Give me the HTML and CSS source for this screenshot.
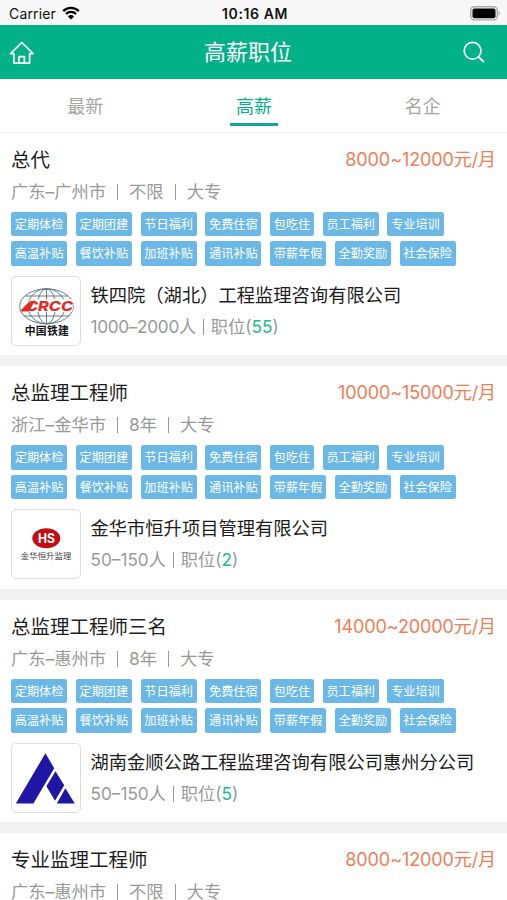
FILE: index.html
```html
<!DOCTYPE html>
<html lang="zh-CN">
<head>
    <meta charset="UTF-8">
    <meta name="viewport" content="width=device-width, initial-scale=1.0">
    <title>高薪职位</title>
    <link rel="stylesheet" href="styles.css">
</head>
<body>

    <!-- Status bar -->
    <div class="status-bar">
        <div class="carrier">
            <span>Carrier</span>
            <svg class="wifi" width="18" height="14" viewBox="0 0 18 14">
                <path d="M1.2 5.1a11 11 0 0 1 15.6 0M4 8a7 7 0 0 1 10 0" fill="none" stroke="#000" stroke-width="2.4"/>
                <path d="M9 13.6L5.9 10.4a4.4 4.4 0 0 1 6.2 0z"/>
            </svg>
        </div>
        <div class="time">10:16 AM</div>
        <svg class="battery" width="31" height="15" viewBox="0 0 31 15">
            <rect x=".7" y=".7" width="26.6" height="13.2" rx="3.8" fill="none" stroke="#aaa" stroke-width="1.4"/>
            <rect x="2.5" y="2.4" width="23" height="9.8" rx="2"/>
            <path d="M28.6 4.6q2.6 2.7 0 5.4z" fill="#aaa"/>
        </svg>
    </div>

    <!-- Header -->
    <div class="header">
        <svg class="home" width="26" height="24" viewBox="0 0 26 24">
            <path d="M1.5 13.7L12.8 2.5l11.3 11.2H20.6V23.1H4.9V13.7zM10 23v-6.4h5.4V23" fill="none" stroke="#fff" stroke-width="1.7" stroke-linejoin="round"/>
        </svg>
        <h1>高薪职位</h1>
        <svg class="search" width="22" height="22" viewBox="0 0 22 22">
            <circle cx="9.6" cy="9.8" r="8.4" fill="none" stroke="#fff" stroke-width="1.7"/>
            <path d="M15.4 15.6l5.4 5.4" stroke="#fff" stroke-width="1.8"/>
        </svg>
    </div>

    <!-- Tabs -->
    <div class="tabs">
        <a class="tab"><span>最新</span></a>
        <a class="tab active"><span>高薪</span></a>
        <a class="tab"><span>名企</span></a>
    </div>

    <!-- Job list -->
    <div class="job-list">
        <div class="job">
            <div class="job-top">
                <h2>总代</h2>
                <span class="salary">8000~12000元/月</span>
            </div>
            <div class="meta"><span>广东–广州市</span><i></i><span>不限</span><i></i><span>大专</span></div>
            <div class="tags">
                <span>定期体检</span><span>定期团建</span><span>节日福利</span><span>免费住宿</span><span>包吃住</span><span>员工福利</span><span>专业培训</span>
                <span>高温补贴</span><span>餐饮补贴</span><span>加班补贴</span><span>通讯补贴</span><span>带薪年假</span><span>全勤奖励</span><span>社会保险</span>
            </div>
            <div class="company">
                <div class="logo">
                    <svg width="68" height="68" viewBox="0 0 68 68">
                        <g fill="none" stroke="#527080" stroke-width=".9">
                            <ellipse cx="34.5" cy="29.3" rx="26.8" ry="17.5"/>
                            <ellipse cx="34.5" cy="29.3" rx="18.5" ry="17.5"/>
                            <ellipse cx="34.5" cy="29.3" rx="9" ry="17.5"/>
                            <path d="M34.5 11.8v35M13 19h43M12 39h45"/>
                        </g>
                        <path d="M7 35L17 24.5Q19.5 22.3 24 22.3H62.5L60 35z" fill="#fff"/>
                        <path d="M7.5 34.4L15.5 26.4Q18.5 23.6 23 23.6L17 34.4z" fill="#e9281f"/>
                        <text class="crcc" x="14" y="34.2" textLength="47" lengthAdjust="spacingAndGlyphs">CRCC</text>
                        <text class="crcc-name" x="12.8" y="58" textLength="44">中国铁建</text>
                    </svg>
                </div>
                <div class="company-info">
                    <h3>铁四院（湖北）工程监理咨询有限公司</h3>
                    <p><span class="size wide">1000–2000人</span><i></i><span>职位(<b>55</b>)</span></p>
                </div>
            </div>
        </div>

        <div class="job">
            <div class="job-top">
                <h2>总监理工程师</h2>
                <span class="salary">10000~15000元/月</span>
            </div>
            <div class="meta"><span>浙江–金华市</span><i></i><span>8年</span><i></i><span>大专</span></div>
            <div class="tags">
                <span>定期体检</span><span>定期团建</span><span>节日福利</span><span>免费住宿</span><span>包吃住</span><span>员工福利</span><span>专业培训</span>
                <span>高温补贴</span><span>餐饮补贴</span><span>加班补贴</span><span>通讯补贴</span><span>带薪年假</span><span>全勤奖励</span><span>社会保险</span>
            </div>
            <div class="company">
                <div class="logo">
                    <svg width="68" height="68" viewBox="0 0 68 68">
                        <ellipse cx="34.3" cy="28.2" rx="14" ry="10" fill="#c20d12"/>
                        <text class="hs" x="26" y="32.9" textLength="17" lengthAdjust="spacingAndGlyphs">HS</text>
                        <text class="hs-name" x="8.8" y="49.3" textLength="50.5">金华恒升监理</text>
                    </svg>
                </div>
                <div class="company-info">
                    <h3>金华市恒升项目管理有限公司</h3>
                    <p><span class="size">50–150人</span><i></i><span>职位(<b>2</b>)</span></p>
                </div>
            </div>
        </div>

        <div class="job">
            <div class="job-top">
                <h2>总监理工程师三名</h2>
                <span class="salary">14000~20000元/月</span>
            </div>
            <div class="meta"><span>广东–惠州市</span><i></i><span>8年</span><i></i><span>大专</span></div>
            <div class="tags">
                <span>定期体检</span><span>定期团建</span><span>节日福利</span><span>免费住宿</span><span>包吃住</span><span>员工福利</span><span>专业培训</span>
                <span>高温补贴</span><span>餐饮补贴</span><span>加班补贴</span><span>通讯补贴</span><span>带薪年假</span><span>全勤奖励</span><span>社会保险</span>
            </div>
            <div class="company">
                <div class="logo">
                    <svg width="68" height="68" viewBox="0 0 68 68">
                        <path d="M33.4 9.3L42.2 24.2 21.4 59.6H3.8zM43.5 27.2L52.2 41.3 43 56.8 34.4 42.3zM53.4 44.3L62.8 59.6H44.8z" fill="#1f16a5"/>
                    </svg>
                </div>
                <div class="company-info">
                    <h3>湖南金顺公路工程监理咨询有限公司惠州分公司</h3>
                    <p><span class="size">50–150人</span><i></i><span>职位(<b>5</b>)</span></p>
                </div>
            </div>
        </div>

        <div class="job last">
            <div class="job-top">
                <h2>专业监理工程师</h2>
                <span class="salary">8000~12000元/月</span>
            </div>
            <div class="meta"><span>广东–惠州市</span><i></i><span>不限</span><i></i><span>大专</span></div>
        </div>
    </div>

</body>
</html>
```
FILE: styles.css
```css
* {
    margin: 0;
    padding: 0;
    box-sizing: border-box;
}

body {
    height: 900px;
    overflow: hidden;
    display: flex;
    flex-direction: column;
    background: #fff;
    color: #1c1c1c;
    font-family: Inter, "Noto Sans CJK SC", sans-serif;
}

svg {
    display: block;
}

/* Status bar */
.status-bar {
    height: 25px;
    flex: none;
    padding: 1px 6px 0 9px;
    display: grid;
    grid-template-columns: 1fr auto 1fr;
    align-items: center;
    background: #f7f7f7;
    color: #111;
    font-size: 14px;
}

.carrier {
    display: flex;
    align-items: center;
    gap: 6px;
    letter-spacing: 0.15px;
}

.time {
    font-weight: 600;
    letter-spacing: 0.6px;
}

.battery {
    justify-self: end;
}

/* Header */
.header {
    height: 54px;
    flex: none;
    padding: 0 22px 0 9px;
    display: grid;
    grid-template-columns: 1fr auto 1fr;
    align-items: center;
    background: #03b188;
}

.header h1 {
    padding-left: 2px;
    color: #fff;
    font-size: 22px;
    font-weight: 400;
    line-height: 54px;
}

.search {
    justify-self: end;
}

/* Tabs */
.tabs {
    height: 54px;
    flex: none;
    display: flex;
    padding-left: 1px;
    border-bottom: 1px solid #eee;
}

.tab {
    flex: 1;
    display: flex;
    justify-content: center;
    color: #a6a6a6;
    font-size: 18px;
    line-height: 55px;
}

.tab span {
    height: 47px;
    padding: 0 6px;
}

.tab.active span {
    color: #03b188;
    border-bottom: 3px solid #12a795;
}

/* Job list */
.job-list {
    flex: 1;
    min-height: 0;
    overflow: hidden;
    background: #f1f1f1;
    display: flex;
    flex-direction: column;
    gap: 11px;
}

.job {
    height: 222.4px;
    flex: none;
    padding: 12px 11px 0;
    background: #fff;
}

.job.last {
    flex: 1;
    height: auto;
    min-height: 0;
}

.job-top {
    display: flex;
    justify-content: space-between;
    line-height: 30px;
}

.job-top h2 {
    font-size: 19.5px;
    font-weight: 400;
}

.salary {
    color: #f47c55;
    font-size: 18px;
    letter-spacing: -0.1px;
}

.meta {
    display: flex;
    align-items: center;
    height: 18px;
    margin-top: 8px;
    color: #999;
    font-size: 17.3px;
    line-height: 18px;
}

.meta i,
.company-info i {
    width: 1px;
    height: 16px;
    background: #999;
}

.meta i {
    margin: 0 11px;
}

.tags {
    display: flex;
    flex-wrap: wrap;
    gap: 5px 8.6px;
    margin-top: 11px;
}

.tags span {
    height: 24.4px;
    padding: 0 3.8px;
    background: #6bb8e6;
    border-radius: 2.5px;
    color: #fff;
    font-size: 12.15px;
    line-height: 25px;
}

/* Company */
.company {
    display: flex;
    margin-top: 10px;
}

.logo {
    width: 70px;
    height: 70px;
    border: 1px solid #ddd;
    border-radius: 5px;
}

.company-info {
    margin-left: 9.5px;
    padding-top: 5px;
}

.company-info h3 {
    font-size: 18.3px;
    font-weight: 400;
    line-height: 28px;
    white-space: nowrap;
}

.company-info p {
    display: flex;
    align-items: center;
    height: 28px;
    margin-top: 4px;
    color: #999;
    font-size: 17.2px;
    line-height: 28px;
}

.company-info .wide {
    letter-spacing: -0.3px;
}

.company-info i {
    margin: 0 7px;
}

.company-info b {
    color: #1abc8c;
    font-weight: 400;
}

/* Logo lettering */
.crcc {
    fill: #e9281f;
    font-size: 13.5px;
    font-weight: 800;
    font-style: italic;
}

.crcc-name {
    fill: #111;
    font-size: 10.8px;
    font-weight: 700;
}

.hs {
    fill: #fff;
    font-size: 13px;
    font-weight: 700;
}

.hs-name {
    fill: #444;
    font-size: 8.4px;
}
```
